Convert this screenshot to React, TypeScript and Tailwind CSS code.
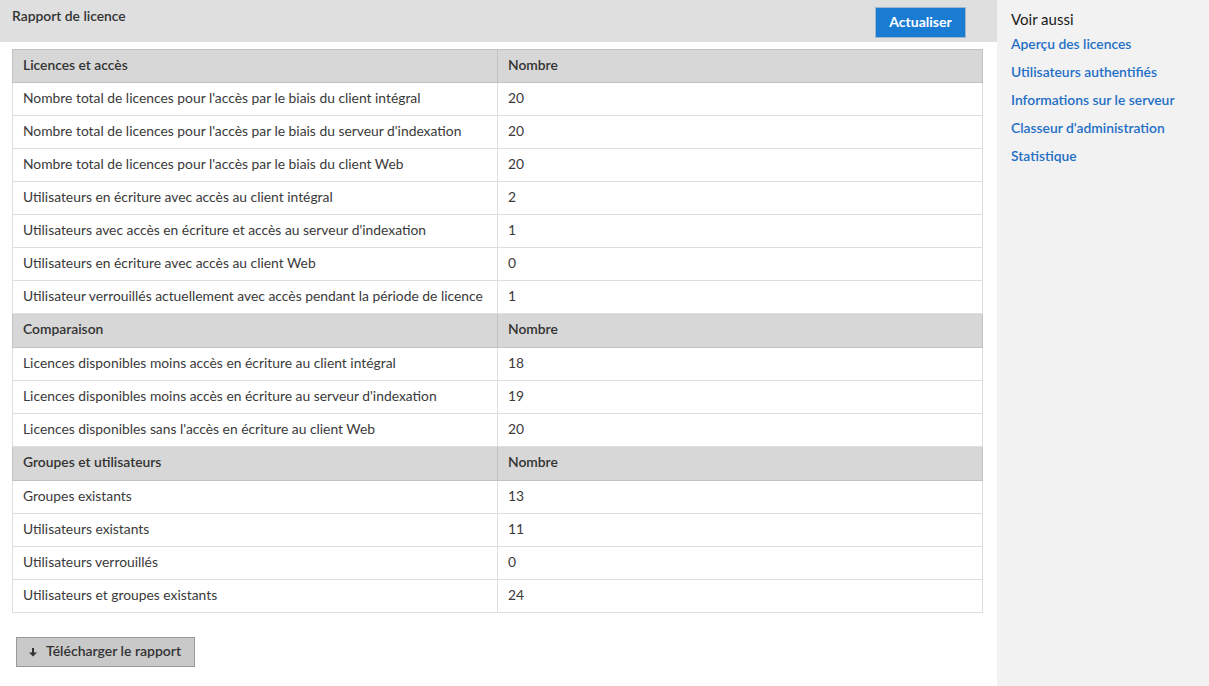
import React from "react";

type Section = { title: string; rows: [string, string][] };

const sections: Section[] = [
  {
    title: "Licences et accès",
    rows: [
      ["Nombre total de licences pour l'accès par le biais du client intégral", "20"],
      ["Nombre total de licences pour l'accès par le biais du serveur d'indexation", "20"],
      ["Nombre total de licences pour l'accès par le biais du client Web", "20"],
      ["Utilisateurs en écriture avec accès au client intégral", "2"],
      ["Utilisateurs avec accès en écriture et accès au serveur d'indexation", "1"],
      ["Utilisateurs en écriture avec accès au client Web", "0"],
      ["Utilisateur verrouillés actuellement avec accès pendant la période de licence", "1"],
    ],
  },
  {
    title: "Comparaison",
    rows: [
      ["Licences disponibles moins accès en écriture au client intégral", "18"],
      ["Licences disponibles moins accès en écriture au serveur d'indexation", "19"],
      ["Licences disponibles sans l'accès en écriture au client Web", "20"],
    ],
  },
  {
    title: "Groupes et utilisateurs",
    rows: [
      ["Groupes existants", "13"],
      ["Utilisateurs existants", "11"],
      ["Utilisateurs verrouillés", "0"],
      ["Utilisateurs et groupes existants", "24"],
    ],
  },
];

const links = [
  "Aperçu des licences",
  "Utilisateurs authentifiés",
  "Informations sur le serveur",
  "Classeur d'administration",
  "Statistique",
];

export default function App() {
  return (
    <div
      className="flex h-[686px] w-[1209px] bg-white text-[13.85px] text-[#3a3a3a]"
      style={{ fontFamily: "Lato, 'Liberation Sans', sans-serif" }}
    >
      <div className="flex w-[997px] flex-col">
        <div className="flex h-[42px] items-start justify-between bg-[#dfdfdf] pl-[12px] pr-[31px]">
          <div className="pt-[6px] text-[13.85px] font-semibold text-[#333]">Rapport de licence</div>
          <button className="mt-[7px] h-[31px] w-[91px] border border-[#9fb6cc] bg-[#1a7bd3] pb-[2px] text-[14px] font-bold text-white">
            Actualiser
          </button>
        </div>
        <div className="pl-[12px] pr-[14px] pt-[7px]">
          <table className="w-full border-collapse border border-[#d0d0d0]">
            <colgroup>
              <col className="w-[485px]" />
              <col />
            </colgroup>
            {sections.map((s, i) => (
              <tbody key={s.title}>
                <tr className={i === 0 ? "h-[33px] bg-[#d7d7d7]" : "h-[34px] bg-[#d7d7d7]"}>
                  <th className="border border-[#c2c2c2] px-[10px] pb-[2px] text-left font-semibold text-[#333]">{s.title}</th>
                  <th className="border border-[#c2c2c2] px-[10px] pb-[2px] text-left font-semibold text-[#333]">Nombre</th>
                </tr>
                {s.rows.map(([label, v]) => (
                  <tr key={label} className="h-[33px]">
                    <td className="whitespace-nowrap border border-[#dedede] px-[10px] pb-[2px] font-normal">{label}</td>
                    <td className="border border-[#dedede] px-[10px] pb-[2px]">{v}</td>
                  </tr>
                ))}
              </tbody>
            ))}
          </table>
        </div>
        <div className="pl-[16px] pt-[24px]">
          <button className="flex h-[30px] w-[179px] items-center gap-[8px] border border-[#9a9a9a] bg-[#c9c9c9] pb-[3px] pl-[11px] text-[14px] font-semibold text-[#333]">
            <svg width="10" height="11" viewBox="0 0 10 11" className="mt-[3px]">
              <path d="M5 1 V7" stroke="#333" strokeWidth="2" />
              <path d="M1 5.5 L5 9.5 L9 5.5 Z" fill="#333" />
            </svg>
            Télécharger le rapport
          </button>
        </div>
      </div>
      <div className="flex-1 bg-[#f2f2f2] pl-[14px] pt-[8px]">
        <div className="text-[15px] text-[#1a1a1a]">Voir aussi</div>
        <div className="flex flex-col">
          {links.map((l) => (
            <a key={l} className="h-[28px] pt-[3px] font-semibold text-[#1f6fc6]">
              {l}
            </a>
          ))}
        </div>
      </div>
    </div>
  );
}
